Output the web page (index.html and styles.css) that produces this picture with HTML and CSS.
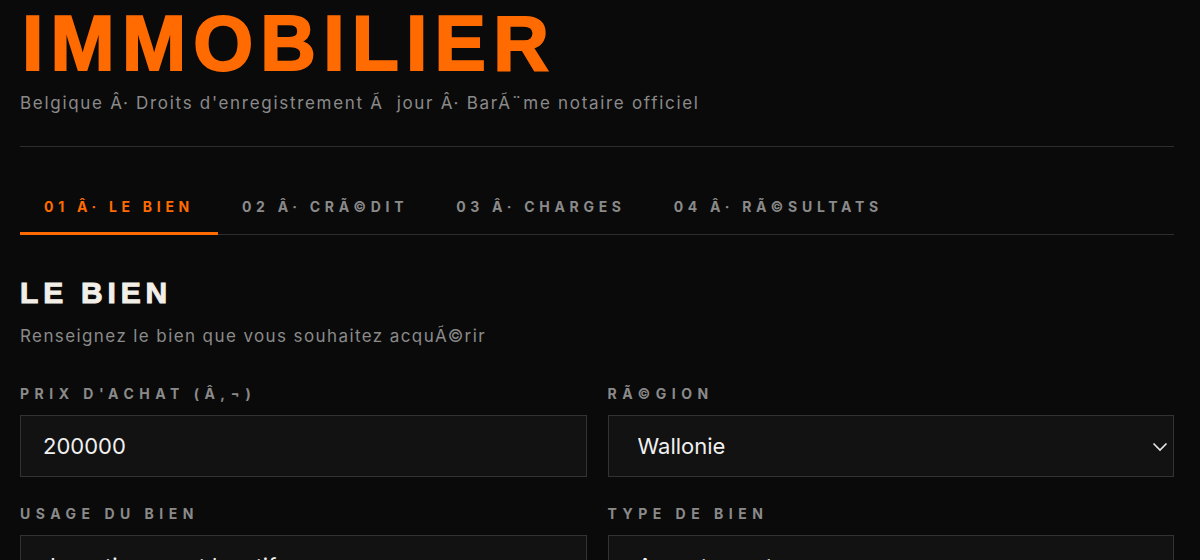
FILE: index.html
```html
<!DOCTYPE html>
<html lang="fr">
<head>
	<meta charset="UTF-8">
	<meta name="viewport" content="width=device-width, initial-scale=1.0">
	<title>Immobilier</title>
	<link rel="stylesheet" href="styles.css">
</head>
<body>
	<div class="page">
		<header class="head">
			<h1 class="title">IMMOBILIER</h1>
			<p class="subtitle">Belgique Â· Droits d'enregistrement Ã&nbsp; jour Â· BarÃ¨me notaire officiel</p>
		</header>
		<nav class="tabs">
			<a class="tab active" href="#">01 Â· Le bien</a>
			<a class="tab" href="#">02 Â· CrÃ©dit</a>
			<a class="tab" href="#">03 Â· Charges</a>
			<a class="tab" href="#">04 Â· RÃ©sultats</a>
		</nav>
		<section class="step">
			<h2 class="step-title">Le bien</h2>
			<p class="step-desc">Renseignez le bien que vous souhaitez acquÃ©rir</p>
			<div class="grid">
				<div class="field">
					<label for="prix">Prix d'achat (Â,¬)</label>
					<input type="text" id="prix" value="200000">
				</div>
				<div class="field">
					<label for="region">RÃ©gion</label>
					<div class="select-wrap">
						<select id="region">
							<option>Wallonie</option>
							<option>Bruxelles</option>
							<option>Flandre</option>
						</select>
						<svg class="chevron" width="16" height="16" viewBox="0 0 16 16"><path d="M1.5 4.5l6.5 6.5 6.5-6.5" fill="none" stroke="#e8e8e8" stroke-width="1.6"/></svg>
					</div>
				</div>
				<div class="field">
					<label for="usage">Usage du bien</label>
					<div class="select-wrap">
						<select id="usage">
							<option>Investissement locatif</option>
							<option>Habitation propre</option>
						</select>
						<svg class="chevron" width="16" height="16" viewBox="0 0 16 16"><path d="M1.5 4.5l6.5 6.5 6.5-6.5" fill="none" stroke="#e8e8e8" stroke-width="1.6"/></svg>
					</div>
				</div>
				<div class="field">
					<label for="type">Type de bien</label>
					<div class="select-wrap">
						<select id="type">
							<option>Appartement</option>
							<option>Maison</option>
						</select>
						<svg class="chevron" width="16" height="16" viewBox="0 0 16 16"><path d="M1.5 4.5l6.5 6.5 6.5-6.5" fill="none" stroke="#e8e8e8" stroke-width="1.6"/></svg>
					</div>
				</div>
			</div>
		</section>
	</div>
</body>
</html>
```

FILE: styles.css
```css
body {
	margin: 0;
	padding: 0;
	background-color: #0a0a0a;
	color: #e8e8e8;
	font-family: Inter, "Liberation Sans", sans-serif;
}
.page {
	width: 1154px;
	margin-left: 20px;
	padding-top: 5px;
}
.head {
	border-bottom: 1px solid #2e2e2e;
	padding-bottom: 33px;
}
.title {
	margin: 0;
	font-family: "Liberation Sans", Arial, sans-serif;
	font-weight: 700;
	font-size: 77px;
	line-height: 1;
	letter-spacing: 7.2px;
	color: #ff6b00;
	-webkit-text-stroke: 2px #ff6b00;
	padding-left: 2px;
}
.subtitle {
	margin: 11px 0 0;
	font-size: 17px;
	letter-spacing: 1.7px;
	color: #8a8a8a;
}
.tabs {
	display: flex;
	border-bottom: 1px solid #2e2e2e;
	margin-top: 51px;
}
.tab {
	padding: 0 24px 17px;
	font-size: 14px;
	font-weight: 700;
	letter-spacing: 4.7px;
	text-transform: uppercase;
	color: #8a8a8a;
	text-decoration: none;
	border-bottom: 3px solid transparent;
	margin-bottom: -1px;
}
.tab.active {
	color: #ff6b00;
	border-bottom-color: #ff6b00;
}
.step {
	padding-top: 43px;
}
.step-title {
	margin: 0;
	font-family: "Liberation Sans", Arial, sans-serif;
	font-weight: 700;
	font-size: 30px;
	line-height: 1;
	letter-spacing: 4.8px;
	text-transform: uppercase;
	color: #f2eee8;
	-webkit-text-stroke: 1px #f2eee8;
}
.step-desc {
	margin: 18px 0 0;
	font-size: 17px;
	letter-spacing: 1.4px;
	color: #8a8a8a;
}
.grid {
	display: grid;
	grid-template-columns: 1fr 1fr;
	column-gap: 21px;
	row-gap: 28px;
	margin-top: 39px;
}
.field label {
	display: block;
	font-size: 14px;
	font-weight: 700;
	letter-spacing: 5.5px;
	text-transform: uppercase;
	color: #8a8a8a;
	margin-bottom: 13px;
}
.field input,
.field select {
	box-sizing: border-box;
	width: 100%;
	height: 62px;
	background-color: #121212;
	border: 1px solid #333;
	color: #f0f0f0;
	font-family: Inter, "Liberation Sans", sans-serif;
	font-size: 22px;
	padding: 0 22px;
	outline: none;
	border-radius: 0;
}
.field select {
	appearance: none;
	-webkit-appearance: none;
	padding-left: 29px;
}
.select-wrap {
	position: relative;
}
.chevron {
	position: absolute;
	right: 6px;
	top: 24px;
	pointer-events: none;
}
```
